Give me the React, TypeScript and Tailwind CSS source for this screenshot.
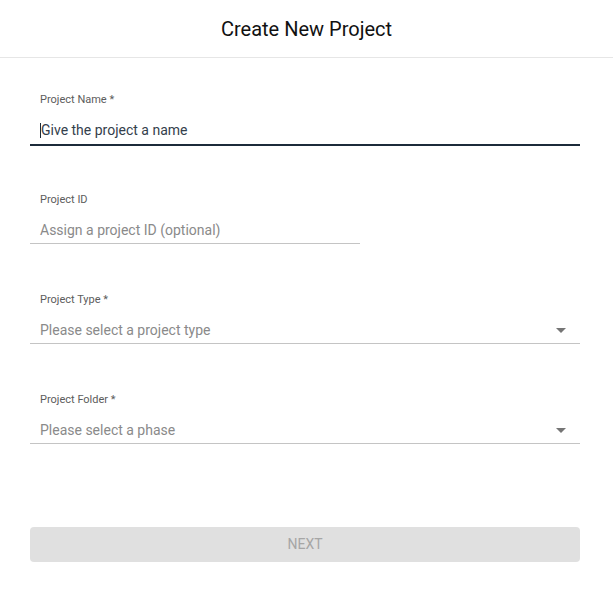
import React from 'react';

const Caret = () => <span className="inline-block w-px h-[15px] bg-[#1c2b3a] align-[-2px]" />;

const Arrow = () => (
  <svg width="10" height="5" viewBox="0 0 10 5" className="shrink-0">
    <path d="M0 0 L10 0 L5 5 Z" fill="#757575" />
  </svg>
);

const Field = ({ label, children }: { label: string; children: React.ReactNode }) => (
  <div className="h-[100px]">
    <label className="block pl-[10px] pt-[1px] text-[11px] leading-[13px] text-[#5c5c5c]">{label}</label>
    <div className="mt-[8px]">{children}</div>
  </div>
);

const App = () => {
  return (
    <div className="min-h-screen bg-white font-['Roboto',sans-serif]">
      <header className="h-[58px] flex items-center justify-center border-b border-[#e6e6e6]">
        <h1 className="text-[20px] text-[#111] pt-[1px]">Create New Project</h1>
      </header>

      <form className="pl-[30px] pr-[33px] pt-[34px]" onSubmit={(e) => e.preventDefault()}>
        <Field label="Project Name *">
          <div className="h-[32px] flex items-center pl-[10px] pt-[3px] border-b-2 border-[#1c2b3a] text-[14px] text-[#34404c]">
            <Caret />
            <span>Give the project a name</span>
          </div>
        </Field>

        <Field label="Project ID">
          <div className="w-[330px] h-[30px] flex items-center pl-[10px] pt-[3px] border-b border-[#c4c4c4] text-[14px] text-[#8a8a8a]">
            Assign a project ID (optional)
          </div>
        </Field>

        <Field label="Project Type *">
          <div className="h-[30px] flex items-center justify-between pl-[10px] pr-[14px] pt-[3px] border-b border-[#c4c4c4] text-[14px] text-[#8a8a8a]">
            <span>Please select a project type</span>
            <Arrow />
          </div>
        </Field>

        <Field label="Project Folder *">
          <div className="h-[30px] flex items-center justify-between pl-[10px] pr-[14px] pt-[3px] border-b border-[#c4c4c4] text-[14px] text-[#8a8a8a]">
            <span>Please select a phase</span>
            <Arrow />
          </div>
        </Field>

        <button
          type="submit"
          disabled
          className="mt-[35px] w-full h-[35px] rounded-[4px] bg-[#e0e0e0] text-[14px] text-[#a6a6a6]"
        >
          NEXT
        </button>
      </form>
    </div>
  );
};

export default App;
